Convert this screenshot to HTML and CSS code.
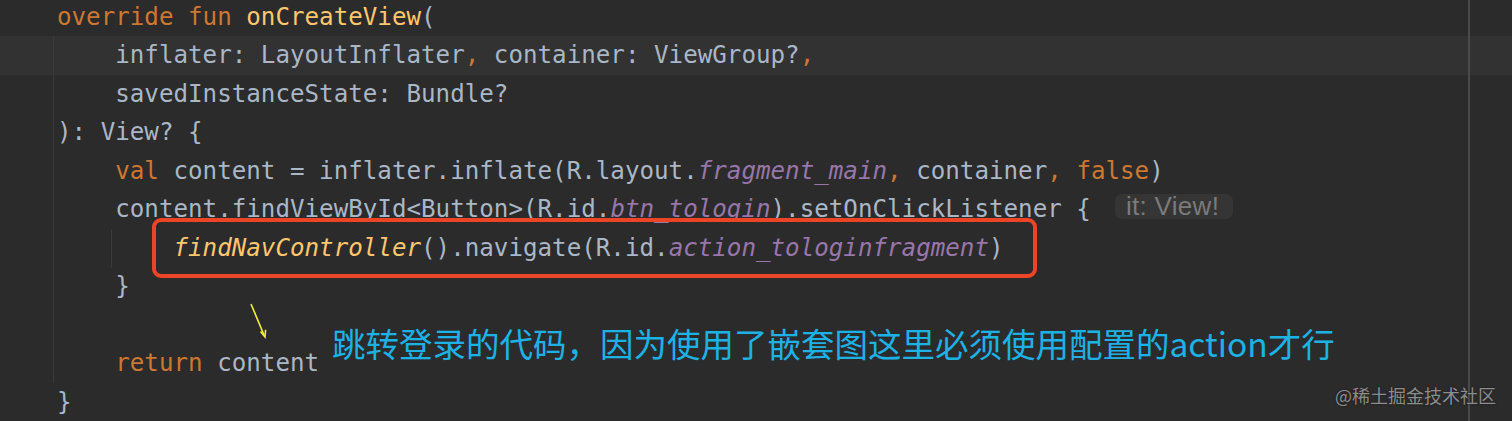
FILE: index.html
```html
<!DOCTYPE html>
<html lang="en">
<head>
  <meta charset="UTF-8">
  <title>onCreateView</title>
  <link rel="stylesheet" href="styles.css">
</head>
<body>
  <div class="editor">
    <div class="code">
      <div class="line"><span class="kw">override fun </span><span class="fn">onCreateView</span>(</div>
      <div class="line current">    inflater: LayoutInflater<span class="kw">,</span> container: ViewGroup?<span class="kw">,</span></div>
      <div class="line">    savedInstanceState: Bundle?</div>
      <div class="line">): View? {</div>
      <div class="line">    <span class="kw">val</span> content = inflater.inflate(R.layout.<span class="field">fragment_main</span><span class="kw">,</span> container<span class="kw">,</span> <span class="kw">false</span>)</div>
      <div class="line">    content.findViewById&lt;Button&gt;(R.id.<span class="field">btn_tologin</span>).setOnClickListener {<span class="hint">it: View!</span></div>
      <div class="line">        <span class="call">findNavController</span>().navigate(R.id.<span class="field">action_tologinfragment</span>)</div>
      <div class="line">    }</div>
      <div class="line"> </div>
      <div class="line">    <span class="kw">return</span> content</div>
      <div class="line">}</div>
    </div>

    <!-- overlays -->
    <div class="guide guide-outer"></div>
    <div class="guide guide-inner"></div>
    <div class="margin-line"></div>
    <div class="mark-box"></div>
    <svg class="arrow" width="30" height="44" viewBox="0 0 30 44">
      <line x1="3" y1="2" x2="16" y2="33" stroke="#f0ee3a" stroke-width="1.6"/>
      <path d="M12.5 29.5 L17 35 L17.6 27.8" fill="none" stroke="#f0ee3a" stroke-width="1.6"/>
    </svg>
    <div class="note">跳转登录的代码，因为使用了嵌套图这里必须使用配置的action才行</div>
    <div class="watermark">@稀土掘金技术社区</div>
  </div>
</body>
</html>
```

FILE: styles.css
```css
body {
  margin: 0;
  background: #2b2b2b;
  overflow: hidden;
}
.editor {
  position: relative;
  width: 1512px;
  height: 421px;
  background: #2b2b2b;
  overflow: hidden;
}
.code {
  margin-top: -2.5px;
  font-family: "DejaVu Sans Mono", "Liberation Mono", monospace;
  font-size: 24.2px;
  color: #a9b7c6;
}
.line {
  height: 38.5px;
  line-height: 38.5px;
  padding-left: 57px;
  white-space: pre;
}
.line.current {
  background: #323232;
}
.kw {
  color: #cc7832;
}
.fn {
  color: #ffc66d;
}
.call {
  color: #ffc66d;
  font-style: italic;
}
.field {
  color: #9876aa;
  font-style: italic;
}
.hint {
  display: inline-block;
  margin-left: 24px;
  height: 25px;
  line-height: 25px;
  padding: 0 14px 0 11px;
  border-radius: 7px;
  background: #353535;
  color: #7a7a7a;
  font-family: "Liberation Sans", Arial, sans-serif;
  font-size: 26px;
  letter-spacing: 0.3px;
  vertical-align: 2px;
}
.guide {
  position: absolute;
  width: 1px;
  background: #3a3a3a;
}
.guide-outer {
  left: 53px;
  top: 36px;
  height: 347px;
}
.guide-inner {
  left: 111px;
  top: 230px;
  height: 38px;
}
.margin-line {
  position: absolute;
  left: 1468px;
  top: 0;
  width: 2px;
  height: 421px;
  background: #4a4a4a;
}
.mark-box {
  position: absolute;
  left: 152px;
  top: 218px;
  width: 877px;
  height: 52px;
  border: 4px solid #ec4526;
  border-radius: 9px;
}
.arrow {
  position: absolute;
  left: 248px;
  top: 302px;
}
.note {
  position: absolute;
  left: 332px;
  top: 322px;
  font-family: "Noto Sans CJK SC", "Noto Sans", sans-serif;
  font-size: 33.5px;
  line-height: 42px;
  color: #1db2e5;
  white-space: nowrap;
}
.watermark {
  position: absolute;
  left: 1335px;
  top: 383px;
  font-family: "Noto Sans CJK SC", "Noto Sans", sans-serif;
  font-size: 18px;
  line-height: 24px;
  color: #8c8c8c;
  text-shadow: 0 0 2px #1a1a1a;
  white-space: nowrap;
}
```
